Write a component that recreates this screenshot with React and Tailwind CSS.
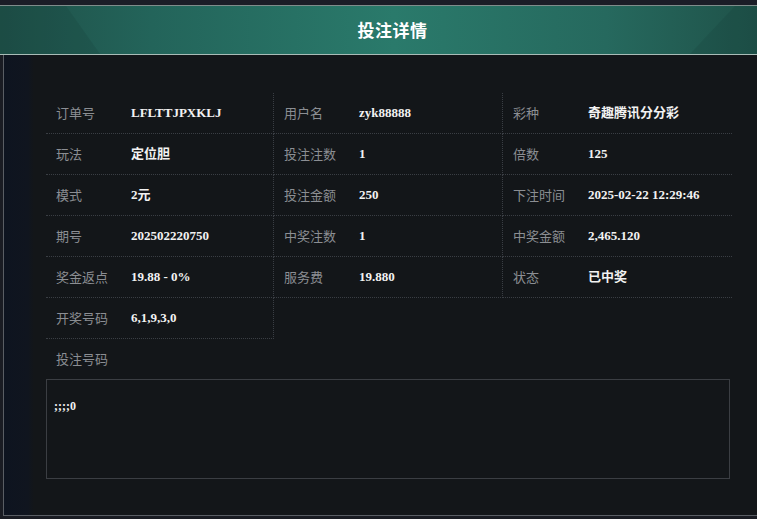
import React from 'react'

const rows = [
  [['订单号', 'LFLTTJPXKLJ'], ['用户名', 'zyk88888'], ['彩种', '奇趣腾讯分分彩']],
  [['玩法', '定位胆'], ['投注注数', '1'], ['倍数', '125']],
  [['模式', '2元'], ['投注金额', '250'], ['下注时间', '2025-02-22 12:29:46']],
  [['期号', '202502220750'], ['中奖注数', '1'], ['中奖金额', '2,465.120']],
  [['奖金返点', '19.88 - 0%'], ['服务费', '19.880'], ['状态', '已中奖']],
]

function Cell({ label, value, right }) {
  return (
    <div
      className={
        'flex items-center h-[41px] border-b border-dotted border-[#3a3e44] pl-[10px] ' +
        (right ? 'border-r' : '')
      }
    >
      <span className="w-[75px] shrink-0 text-[13px] text-[#8b8e93] font-['Noto_Sans_CJK_SC',sans-serif]">
        {label}
      </span>
      <span className="text-[13px] font-bold text-[#f2f2f2] font-['Liberation_Serif','Noto_Sans_CJK_SC',serif]">
        {value}
      </span>
    </div>
  )
}

export default function App() {
  return (
    <div className="w-[757px] h-[519px] overflow-hidden bg-[#1a1c23] flex flex-col font-['Noto_Sans_CJK_SC',sans-serif]">
      <div className="h-[5px] bg-[#1b1d27] shrink-0"></div>
      <div className="h-px bg-[#7f8c8b] shrink-0"></div>
      <div className="relative h-[48px] shrink-0 flex items-center justify-center pl-[28px] bg-[linear-gradient(90deg,#1f5048_0%,#23645a_20%,#2a7a6b_52%,#26695e_80%,#1f5249_100%)]">
        <svg className="absolute inset-0" width="757" height="48" viewBox="0 0 757 48">
          <polygon points="0,0 66,0 100,48 0,48" fill="#163c36" opacity="0.2" />
          <polygon points="757,0 735,0 690,48 757,48" fill="#163c36" opacity="0.2" />
        </svg>
        <span className="relative text-[17px] font-bold text-white tracking-[0.5px]">投注详情</span>
      </div>
      <div className="h-px bg-[#a9bcb7] shrink-0"></div>
      <div className="ml-[3px] h-[461px] shrink-0 border-l border-b border-[#5a5e64] bg-[linear-gradient(90deg,#0e1420_0px,#10151f_24px,#131619_30px)] pl-[42px] pt-[38px]">
        <div className="grid grid-cols-[228px_229px_229px] w-[686px]">
          {rows.map((r, i) =>
            r.map((c, j) => (
              <Cell key={i + '-' + j} label={c[0]} value={c[1]} right={j < 2} />
            ))
          )}
          <Cell label="开奖号码" value="6,1,9,3,0" right />
        </div>
        <div className="flex items-center h-[40px] pl-[10px] text-[13px] text-[#8b8e93]">投注号码</div>
        <div className="w-[684px] h-[100px] border border-[#3b3e43] px-[7px] pt-[11px]">
          <span className="text-[12px] font-bold text-[#f2f2f2] font-['Liberation_Serif',serif]">;;;;0</span>
        </div>
      </div>
    </div>
  )
}
